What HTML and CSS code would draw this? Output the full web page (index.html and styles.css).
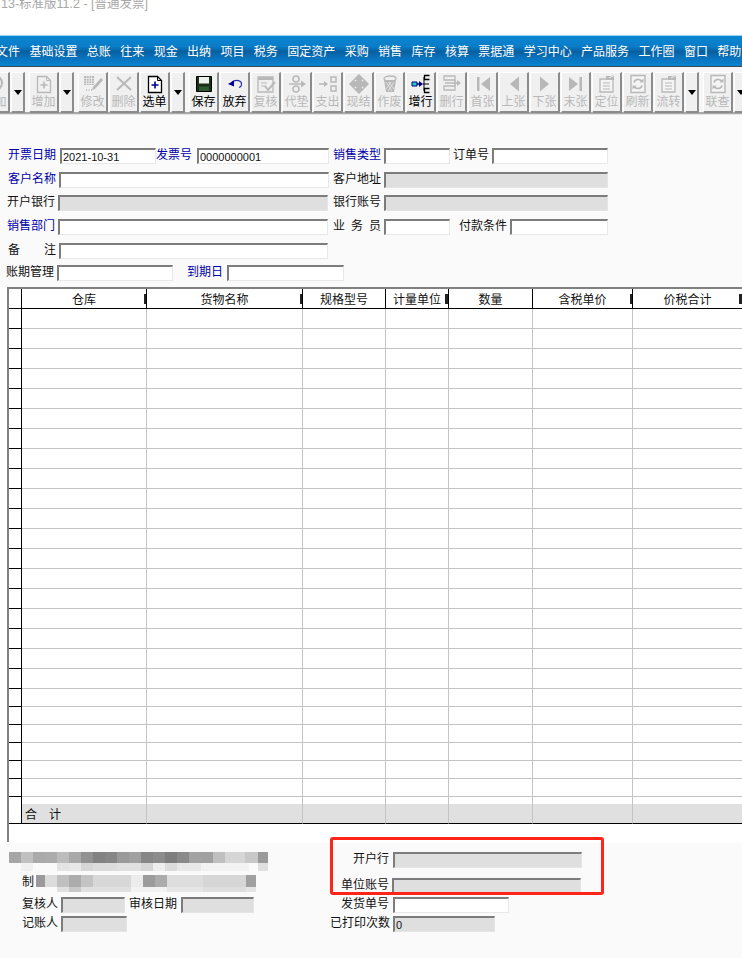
FILE: index.html
```html
<!DOCTYPE html>
<html lang="zh">
<head>
<meta charset="utf-8">
<title>普通发票</title>
<link rel="stylesheet" href="styles.css">
</head>
<body>
<svg class="defs" width="0" height="0" aria-hidden="true">
  <symbol id="i-clip" viewBox="0 0 20 20"><circle cx="10" cy="9" r="7" fill="none" stroke="currentColor" stroke-width="2"/><path d="M7 6l6 6M13 6l-6 6" stroke="currentColor" stroke-width="1.5"/></symbol>
  <symbol id="i-add" viewBox="0 0 20 20"><path class="leaf" d="M3.5 2.5h9l4 4v12h-13z" stroke="currentColor" stroke-width="1.3"/><path d="M12.5 2.5v4h4" fill="none" stroke="currentColor"/><path class="accent" d="M10 7.5v7M6.5 11h7" fill="none" stroke-width="1.6"/></symbol>
  <symbol id="i-edit" viewBox="0 0 20 20"><path d="M1 2h10v9H1z" fill="currentColor"/><path d="M1 4.5h10M1 7h10M1 9.500h10M3.500 2v9M6 2v9M8.500 2v9" stroke="#f0f0f0" stroke-width=".7"/><path d="M18 4l2 2-8 9-3 1 1-3z" fill="currentColor"/><path d="M3 16h1M5.500 16h1M8 16h1" stroke="currentColor" stroke-width="1.500"/></symbol>
  <symbol id="i-x" viewBox="0 0 20 20"><path d="M3 3l14 13M17 3L3 16" stroke="currentColor" stroke-width="2" fill="none"/></symbol>
  <symbol id="i-save" viewBox="0 0 20 20"><path d="M2.500 2.500h15v15h-15z" fill="#1a2e1a" stroke="#000" stroke-width="1"/><path d="M5 3h10v6.500H5z" fill="#eef2ee"/><path d="M5 12.500h10v4.500H5z" fill="#2c5a2e"/></symbol>
  <symbol id="i-undo" viewBox="0 0 20 20"><path d="M7 8c4-3 10-1.500 9.500 2.500 0 1.500-1 2.500-2.500 3" fill="none" stroke="#1a2fb0" stroke-width="1.200"/><path d="M3 10l6-3.500 0 6z" fill="#000090"/></symbol>
  <symbol id="i-check" viewBox="0 0 20 20"><path d="M2 3h15v15H2z" fill="#f0f0f0" stroke="currentColor" stroke-width="1.300"/><path d="M2 3h15v3H2z" fill="currentColor"/><path d="M5 9h6M5 12h5" stroke="currentColor"/><path d="M9 12l3 4 7-8" fill="none" stroke="currentColor" stroke-width="2"/></symbol>
  <symbol id="i-dd" viewBox="0 0 20 20"><circle cx="9" cy="5" r="3" fill="none" stroke="currentColor" stroke-width="1.500"/><circle cx="9" cy="15" r="3" fill="none" stroke="currentColor" stroke-width="1.500"/><path d="M2 10h13" stroke="currentColor" stroke-width="1.500"/><path d="M14 6.500l5 3.500-5 3.500z" fill="currentColor"/></symbol>
  <symbol id="i-out" viewBox="0 0 20 20"><path d="M1 10h7" stroke="currentColor" stroke-width="1.500"/><path d="M6 7l4 3-4 3z" fill="currentColor"/><path d="M13 3h5v5h-5zM13 12h5v5h-5z" fill="none" stroke="currentColor" stroke-width="1.500"/></symbol>
  <symbol id="i-cash" viewBox="0 0 20 20"><path d="M10 1l4 4h-2v3h3V6l4 4-4 4v-2h-3v3h2l-4 4-4-4h2v-3H5v2l-4-4 4-4v2h3V5H6z" fill="currentColor" stroke="currentColor" stroke-width="1.500"/></symbol>
  <symbol id="i-trash" viewBox="0 0 20 20"><ellipse cx="10" cy="4.500" rx="6" ry="2.500" fill="none" stroke="currentColor" stroke-width="1.300"/><path d="M4 6l2 12h8l2-12z" fill="currentColor"/><path d="M6 8l6 9M9 8l5 7M14 8l-6 9M11 8l-5 7" stroke="#f0f0f0" stroke-width=".7"/></symbol>
  <symbol id="i-row" viewBox="0 0 20 20"><path d="M1 8h5v4H1z" fill="#20d0d0" stroke="#000080"/><path d="M6 10h5" stroke="#000080" stroke-width="1.500"/><path d="M8 7l4 3-4 3z" fill="#000080"/><path d="M13 3v14M12 10h6" fill="none" stroke="#000"/><path d="M18.500 1.500h-5v4h5M18.500 14.500h-5v4h5" fill="none" stroke="#000" stroke-width="1.300"/></symbol>
  <symbol id="i-delrow" viewBox="0 0 20 20"><path d="M2 2h11v4H2zM2 12h11v4H2z" fill="none" stroke="currentColor" stroke-width="1.300"/><path d="M13 6v6M3 9h12" stroke="currentColor" stroke-width="1.500"/><path d="M15 6l4 3-4 3z" fill="currentColor"/></symbol>
  <symbol id="i-first" viewBox="0 0 20 20"><path d="M4 3h2.500v14H4zM17 3v14l-9-7z" fill="currentColor"/></symbol>
  <symbol id="i-prev" viewBox="0 0 20 20"><path d="M15 2.500v15l-9-7.500z" fill="currentColor"/></symbol>
  <symbol id="i-next" viewBox="0 0 20 20"><path d="M5 2.500v15l9-7.500z" fill="currentColor"/></symbol>
  <symbol id="i-last" viewBox="0 0 20 20"><path d="M13.500 3H16v14h-2.500zM3 3v14l9-7z" fill="currentColor"/></symbol>
  <symbol id="i-loc" viewBox="0 0 20 20"><path d="M3 5h13v13H3z" fill="#f4f4f4" stroke="currentColor" stroke-width="1.300"/><path d="M6 9h7M6 12h7M6 15h7" stroke="currentColor"/><path d="M9 2h5l3-1v5h-8z" fill="currentColor"/><path d="M12 4l6-3" stroke="#f0f0f0"/></symbol>
  <symbol id="i-ref" viewBox="0 0 20 20"><path d="M3 1.500h14v17H3z" fill="#f4f4f4" stroke="currentColor" stroke-width="1.400"/><path d="M6 8.500c1-3.500 6-4 8-1M14 11.500c-1 3.500-6 4-8 1" fill="none" stroke="currentColor" stroke-width="1.600"/><path d="M15.500 4.500v4h-4zM4.500 15.500v-4h4z" fill="currentColor"/></symbol>
</svg>

<div class="page">
  <header class="title"><span>13-标准版11.2 - [普通发票]</span></header>

  <nav class="menu">
    <span>文件</span><span>基础设置</span><span>总账</span><span>往来</span><span>现金</span><span>出纳</span><span>项目</span><span>税务</span><span>固定资产</span><span>采购</span><span>销售</span><span>库存</span><span>核算</span><span>票据通</span><span>学习中心</span><span>产品服务</span><span>工作圈</span><span>窗口</span><span>帮助</span>
  </nav>

  <div class="toolbar">
    <button class="btn off clip"><svg><use href="#i-clip"/></svg><span>添加</span></button>
    <button class="drop"></button>
    <button class="btn off"><svg><use href="#i-add"/></svg><span>增加</span></button>
    <button class="drop"></button>
    <button class="btn off"><svg><use href="#i-edit"/></svg><span>修改</span></button>
    <button class="btn off"><svg><use href="#i-x"/></svg><span>删除</span></button>
    <button class="btn on blue"><svg><use href="#i-add"/></svg><span>选单</span></button>
    <button class="drop"></button>
    <button class="btn on"><svg><use href="#i-save"/></svg><span>保存</span></button>
    <button class="btn on"><svg><use href="#i-undo"/></svg><span>放弃</span></button>
    <button class="btn off"><svg><use href="#i-check"/></svg><span>复核</span></button>
    <button class="btn off"><svg><use href="#i-dd"/></svg><span>代垫</span></button>
    <button class="btn off"><svg><use href="#i-out"/></svg><span>支出</span></button>
    <button class="btn off"><svg><use href="#i-cash"/></svg><span>现结</span></button>
    <button class="btn off"><svg><use href="#i-trash"/></svg><span>作废</span></button>
    <button class="btn on"><svg><use href="#i-row"/></svg><span>增行</span></button>
    <button class="btn off"><svg><use href="#i-delrow"/></svg><span>删行</span></button>
    <button class="btn off"><svg><use href="#i-first"/></svg><span>首张</span></button>
    <button class="btn off"><svg><use href="#i-prev"/></svg><span>上张</span></button>
    <button class="btn off"><svg><use href="#i-next"/></svg><span>下张</span></button>
    <button class="btn off"><svg><use href="#i-last"/></svg><span>末张</span></button>
    <button class="btn off"><svg><use href="#i-loc"/></svg><span>定位</span></button>
    <button class="btn off"><svg><use href="#i-ref"/></svg><span>刷新</span></button>
    <button class="btn off"><svg><use href="#i-loc"/></svg><span>流转</span></button>
    <button class="drop"></button>
    <button class="btn off"><svg><use href="#i-ref"/></svg><span>联查</span></button>
    <button class="drop"></button>
  </div>

  <form class="form">
    <div class="row r1">
      <label class="lb link l48">开票日期</label><input class="in w96 ml4" value="2021-10-31" readonly>
      <label class="lb link l36">发票号</label><input class="in w132 ml5" value="0000000001" readonly>
      <label class="lb link l48 ml4">销售类型</label><input class="in w66 ml3" readonly>
      <label class="lb l36 ml3">订单号</label><input class="in w116 ml3" readonly>
    </div>
    <div class="row r2">
      <label class="lb link l48">客户名称</label><input class="in w270 ml3" readonly>
      <label class="lb l48 ml4">客户地址</label><input class="in gray w224 ml3" readonly>
    </div>
    <div class="row r3">
      <label class="lb l48">开户银行</label><input class="in gray w270 ml3" readonly>
      <label class="lb l48 ml5">银行账号</label><input class="in gray w224 ml3" readonly>
    </div>
    <div class="row r3 r4">
      <label class="lb link l48">销售部门</label><input class="in w270 ml3" readonly>
      <label class="lb just l48 ml5">业 务 员</label><input class="in w66 ml3" readonly>
      <label class="lb l48 ml9">付款条件</label><input class="in w98 ml3" readonly>
    </div>
    <div class="row r4 r5">
      <label class="lb just l48">备 注</label><input class="in w269 ml3" readonly>
    </div>
    <div class="row r6">
      <label class="lb l48">账期管理</label><input class="in w116 ml3" readonly>
      <label class="lb link l36 ml14">到期日</label><input class="in w117 ml4" readonly>
    </div>
  </form>

  <section class="grid">
    <table class="sheet">
      <colgroup><col class="c0"><col class="c1"><col class="c2"><col class="c3"><col class="c4"><col class="c5"><col class="c6"><col class="c7"></colgroup>
      <thead>
        <tr><th class="gut"></th><th>仓库<i class="m"></i></th><th>货物名称<i class="m"></i></th><th>规格型号</th><th>计量单位<i class="m b"></i></th><th>数量</th><th>含税单价<i class="m"></i></th><th>价税合计<i class="m b"></i></th></tr>
      </thead>
      <tbody>
        <tr><td class="gut"></td><td></td><td></td><td></td><td></td><td></td><td></td><td></td></tr>
        <tr><td class="gut"></td><td></td><td></td><td></td><td></td><td></td><td></td><td></td></tr>
        <tr><td class="gut"></td><td></td><td></td><td></td><td></td><td></td><td></td><td></td></tr>
        <tr><td class="gut"></td><td></td><td></td><td></td><td></td><td></td><td></td><td></td></tr>
        <tr><td class="gut"></td><td></td><td></td><td></td><td></td><td></td><td></td><td></td></tr>
        <tr><td class="gut"></td><td></td><td></td><td></td><td></td><td></td><td></td><td></td></tr>
        <tr><td class="gut"></td><td></td><td></td><td></td><td></td><td></td><td></td><td></td></tr>
        <tr><td class="gut"></td><td></td><td></td><td></td><td></td><td></td><td></td><td></td></tr>
        <tr><td class="gut"></td><td></td><td></td><td></td><td></td><td></td><td></td><td></td></tr>
        <tr><td class="gut"></td><td></td><td></td><td></td><td></td><td></td><td></td><td></td></tr>
        <tr><td class="gut"></td><td></td><td></td><td></td><td></td><td></td><td></td><td></td></tr>
        <tr><td class="gut"></td><td></td><td></td><td></td><td></td><td></td><td></td><td></td></tr>
        <tr><td class="gut"></td><td></td><td></td><td></td><td></td><td></td><td></td><td></td></tr>
        <tr><td class="gut"></td><td></td><td></td><td></td><td></td><td></td><td></td><td></td></tr>
        <tr><td class="gut"></td><td></td><td></td><td></td><td></td><td></td><td></td><td></td></tr>
        <tr><td class="gut"></td><td></td><td></td><td></td><td></td><td></td><td></td><td></td></tr>
        <tr><td class="gut"></td><td></td><td></td><td></td><td></td><td></td><td></td><td></td></tr>
        <tr><td class="gut"></td><td></td><td></td><td></td><td></td><td></td><td></td><td></td></tr>
        <tr><td class="gut"></td><td></td><td></td><td></td><td></td><td></td><td></td><td></td></tr>
        <tr class="low"><td class="gut"></td><td></td><td></td><td></td><td></td><td></td><td></td><td></td></tr>
        <tr class="low"><td class="gut"></td><td></td><td></td><td></td><td></td><td></td><td></td><td></td></tr>
        <tr class="low"><td class="gut"></td><td></td><td></td><td></td><td></td><td></td><td></td><td></td></tr>
        <tr class="low"><td class="gut"></td><td></td><td></td><td></td><td></td><td></td><td></td><td></td></tr>
        <tr class="low"><td class="gut"></td><td></td><td></td><td></td><td></td><td></td><td></td><td></td></tr>
        <tr class="low"><td class="gut"></td><td></td><td></td><td></td><td></td><td></td><td></td><td></td></tr>
      </tbody>
      <tfoot>
        <tr><td class="gut"></td><td class="sum">合<b></b>计</td><td></td><td></td><td></td><td></td><td></td><td></td></tr>
      </tfoot>
    </table>
  </section>

  <footer class="foot">
    <div class="col-l">
      <div class="mosaic m1"></div>
      <div class="row fr2"><label class="lb">制</label><div class="mosaic m2"></div></div>
      <div class="row fr3"><label class="lb l36">复核人</label><input class="in gray w64 ml3" readonly><label class="lb l48 ml4">审核日期</label><input class="in gray w73 ml4" readonly></div>
      <div class="row fr4"><label class="lb l36">记账人</label><input class="in gray w66 ml3" readonly></div>
    </div>
    <div class="col-r">
      <div class="row"><label class="lb rt">开户行</label><input class="in gray w189 ml4" readonly></div>
      <div class="row fr-b"><label class="lb rt">单位账号</label><input class="in gray w189 ml3" readonly></div>
      <div class="row fr-c"><label class="lb rt">发货单号</label><input class="in w116 ml4" readonly></div>
      <div class="row fr-d"><label class="lb rt">已打印次数</label><input class="in gray w102 ml4" value="0" readonly></div>
    </div>
    <div class="redbox"></div>
  </footer>
</div>
</body>
</html>
```
FILE: styles.css
```css
* { box-sizing: border-box; }
html, body { margin: 0; padding: 0; background: #fff; }
body {
  width: 742px;
  height: 958px;
  overflow: hidden;
  font: 12px/14px "Noto Sans CJK SC", "Liberation Sans", sans-serif;
  color: #111;
}
.defs { position: absolute; }
.page { width: 742px; height: 958px; overflow: hidden; }

/* title */
.title {
  height: 35px;
  font: 12.5px/9px "Liberation Sans", "Noto Sans CJK SC", sans-serif;
  color: #a8a8a8;
  padding-left: 1px;
  white-space: nowrap;
  overflow: hidden;
}

/* menu */
.menu {
  height: 32px;
  display: flex;
  align-items: center;
  gap: 9.4px;
  border-top: 1px solid #9ad4f2;
  border-bottom: 1px solid #3d4a55;
  background: linear-gradient(#0a86d2 0%, #0a7cc8 35%, #07609f 52%, #0a72bc 72%, #0a82d0 100%);
  color: #fff;
  white-space: nowrap;
}
.menu span:first-child { margin-left: -4px; }

/* toolbar */
.toolbar {
  height: 50px;
  display: flex;
  align-items: flex-start;
  gap: 1px;
  padding-top: 5px;
  background: linear-gradient(#f6f6f6 0 45px, #a8a8a8 45px 47px, #e4e4e4 47px 48px, #fafafa 48px);
  white-space: nowrap;
}
.btn, .drop {
  flex: none;
  height: 41px;
  padding: 0;
  margin: 0;
  background: #f0f0f0;
  border: 1px solid;
  border-color: #fff #8c8c8c #8c8c8c #fff;
  border-width: 1px 2px 2px 1px;
  font: inherit;
}
.btn {
  width: 30px;
  display: flex;
  flex-direction: column;
  align-items: center;
  padding-top: 1px;
}
.btn svg { width: 20px; height: 20px; flex: none; display: block; }
.btn span { display: block; width: 28px; text-align: center; line-height: 14px; }
.clip { margin-left: -20px; }
.off { color: #b8b8b8; }
.on { color: #000; }
.blue { --accent: #000090; --leaf: #fff; }
.accent { stroke: var(--accent, currentColor); }
.leaf { fill: var(--leaf, #f0f0f0); }
.drop {
  width: 14px;
  margin-right: 3px;
  display: flex;
  justify-content: center;
  align-items: center;
}
.drop::after {
  content: "";
  border-style: solid;
  border-width: 5px 4.5px 0;
  border-color: #000 transparent transparent;
}

/* form */
.form {
  height: 170px;
  padding-top: 31px;
  background: #fafafa;
}
.row { display: flex; align-items: flex-start; height: 16px; white-space: nowrap; }
.r1 { padding-left: 8px; }
.r2 { padding-left: 8px; margin-top: 8px; }
.r3 { padding-left: 7px; margin-top: 7px; }
.r4 { margin-top: 8px; padding-left: 7px; }
.r5 { padding-left: 8px; }
.r6 { padding-left: 6px; margin-top: 6px; }

.lb { display: block; flex: none; line-height: 14px; margin-top: -1px; }
.link { color: #0000a8; }
.just { text-align: justify; text-align-last: justify; }
.l36 { width: 36px; }
.l48 { width: 48px; }
.ml3 { margin-left: 3px; }
.ml4 { margin-left: 4px; }
.ml5 { margin-left: 5px; }
.ml9 { margin-left: 9px; }
.ml14 { margin-left: 14px; }

.in {
  flex: none;
  display: block;
  height: 16px;
  margin-top: 0;
  padding: 0 0 0 1px;
  background: #fff;
  border-style: solid;
  border-width: 2px 1px 1px 2px;
  border-color: #7c7c7c #e8e8e8 #e8e8e8 #7c7c7c;
  border-radius: 0;
  outline: none;
  font: 11px/13px "Liberation Sans", sans-serif;
  color: #111;
}
.gray { background: #dfdfdf; border-color: #7c7c7c #e4e4e4 #e4e4e4 #7c7c7c; }
.w64 { width: 64px; }
.w66 { width: 66px; }
.w73 { width: 73px; }
.w96 { width: 96px; }
.w98 { width: 98px; }
.w102 { width: 102px; }
.w116 { width: 116px; }
.w117 { width: 117px; }
.w132 { width: 132px; }
.w189 { width: 189px; }
.w224 { width: 224px; }
.w269 { width: 269px; }
.w270 { width: 270px; }

/* grid */
.grid {
  height: 556px;
  padding-left: 7px;
  background: #fff;
}
.sheet {
  width: 735px;
  table-layout: fixed;
  border-collapse: separate;
  border-spacing: 0;
  border-left: 2px solid #808080;
  border-top: 2px solid #808080;
  padding-bottom: 18px;
  background: #fff;
}
.c0 { width: 13px; }
.c1 { width: 125px; }
.c2 { width: 156px; }
.c3 { width: 83px; }
.c4 { width: 63px; }
.c5 { width: 84px; }
.c6 { width: 100px; }
.c7 { width: 109px; }
.sheet th, .sheet td { padding: 0; }
.sheet th {
  position: relative;
  height: 20px;
  font-weight: 400;
  font-size: 12px;
  line-height: 19px;
  text-align: center;
  border-right: 1px solid #000;
  border-bottom: 1px solid #000;
  overflow: hidden;
}
.sheet th:last-child { border-right: 0; }
.m {
  position: absolute;
  right: 0;
  top: 5px;
  width: 2px;
  height: 10px;
  background: #222;
}
.m.b { width: 3px; }
.sheet tbody tr { height: 20px; }
.sheet tbody tr.low { height: 18px; }
.sheet td {
  border-right: 1px solid #c4c4c4;
  border-bottom: 1px solid #c4c4c4;
}
.sheet td:last-child { border-right: 0; }
.sheet .gut { border-right: 1px solid #000; border-bottom: 1px solid #000; }
.sheet tfoot td {
  height: 27px;
  border-bottom: 1px solid #000;
  background: linear-gradient(#fff 0 7px, #e0e0e0 7px);
  vertical-align: bottom;
}
.sheet tfoot .gut { background: #fff; }
.sheet .sum { line-height: 19px; padding-left: 3px; white-space: nowrap; }
.sum b { display: inline-block; width: 12px; }

/* footer */
.foot {
  position: relative;
  height: 115px;
  display: flex;
  padding-top: 9px;
  background: #fafafa;
}
.col-l { width: 330px; flex: none; }
.col-r { flex: none; }
.mosaic { flex: none; }
.m1 {
  width: 259px;
  height: 19px;
  margin-left: 9px;
  background:
    linear-gradient(90deg, #a6a6a6 0 12px, #c0c0c0 12px 24px, #aaa 24px 36px, #acacac 36px 48px, #bcbcbc 48px 60px, #a8a8a8 60px 72px, #929292 72px 84px, #828282 84px 96px, #868686 96px 108px, #9a9a9a 108px 120px, #a0a0a0 120px 132px, #868686 132px 144px, #8c8c8c 144px 156px, #7e7e7e 156px 168px, #8a8a8a 168px 180px, #a2a2a2 180px 192px, #a0a0a0 192px 204px, #c0c0c0 204px 216px, #d6d6d6 216px 236px, #c8c8c8 236px 249px, #9a9a9a 249px 259px) 0 0 / 100% 11px no-repeat,
    linear-gradient(90deg, #fafafa 0 12px, #f0f0f0 12px 24px, #fafafa 24px 48px, #e4e4e4 48px 60px, #e8e8e8 60px 72px, #d6d6d6 72px 84px, #dcdcdc 84px 108px, #e0e0e0 108px 132px, #d6d6d6 132px 144px, #eee 144px 156px, #dcdcdc 156px 168px, #e8e8e8 168px 192px, #f2f2f2 192px 240px, #fafafa 240px 249px, #e0e0e0 249px 259px) 0 11px / 100% 8px no-repeat;
}
.fr2 { height: 17px; margin-top: 4px; padding-left: 22px; }
.fr2 .lb { width: 12px; }
.m2 {
  width: 220px;
  height: 17px;
  margin-left: 2px;
  background:
    linear-gradient(90deg, #9a9a9a 0 9px, #dcdcdc 9px 21px, #c0c0c0 21px 33px, #acacac 33px 45px, #c4c4c4 45px 57px, #d8d8d8 57px 95px, #ececec 95px 107px, #9c9c9c 107px 119px, #acacac 119px 131px, #ddd 131px 167px, #d6d6d6 167px 210px, #a0a0a0 210px 220px) 0 0 / 100% 12px no-repeat,
    linear-gradient(90deg, #fafafa 0 21px, #e0e0e0 21px 33px, #c8c8c8 33px 45px, #e0e0e0 45px 95px, #f2f2f2 95px 131px, #e6e6e6 131px 167px, #dedede 167px 210px, #e4e4e4 210px 220px) 0 12px / 100% 5px no-repeat;
}
.fr3 { margin-top: 5px; padding-left: 22px; }
.fr4 { margin-top: 3px; padding-left: 22px; }
.col-r .lb { width: 59px; }
.rt { text-align: right; }
.fr-b { margin-top: 10px; }
.fr-c { margin-top: 3px; }
.fr-d { margin-top: 3px; }
.redbox {
  position: absolute;
  left: 330px;
  top: -6px;
  width: 274px;
  height: 58px;
  border: 3px solid #ff2419;
  border-radius: 3px;
}
```
